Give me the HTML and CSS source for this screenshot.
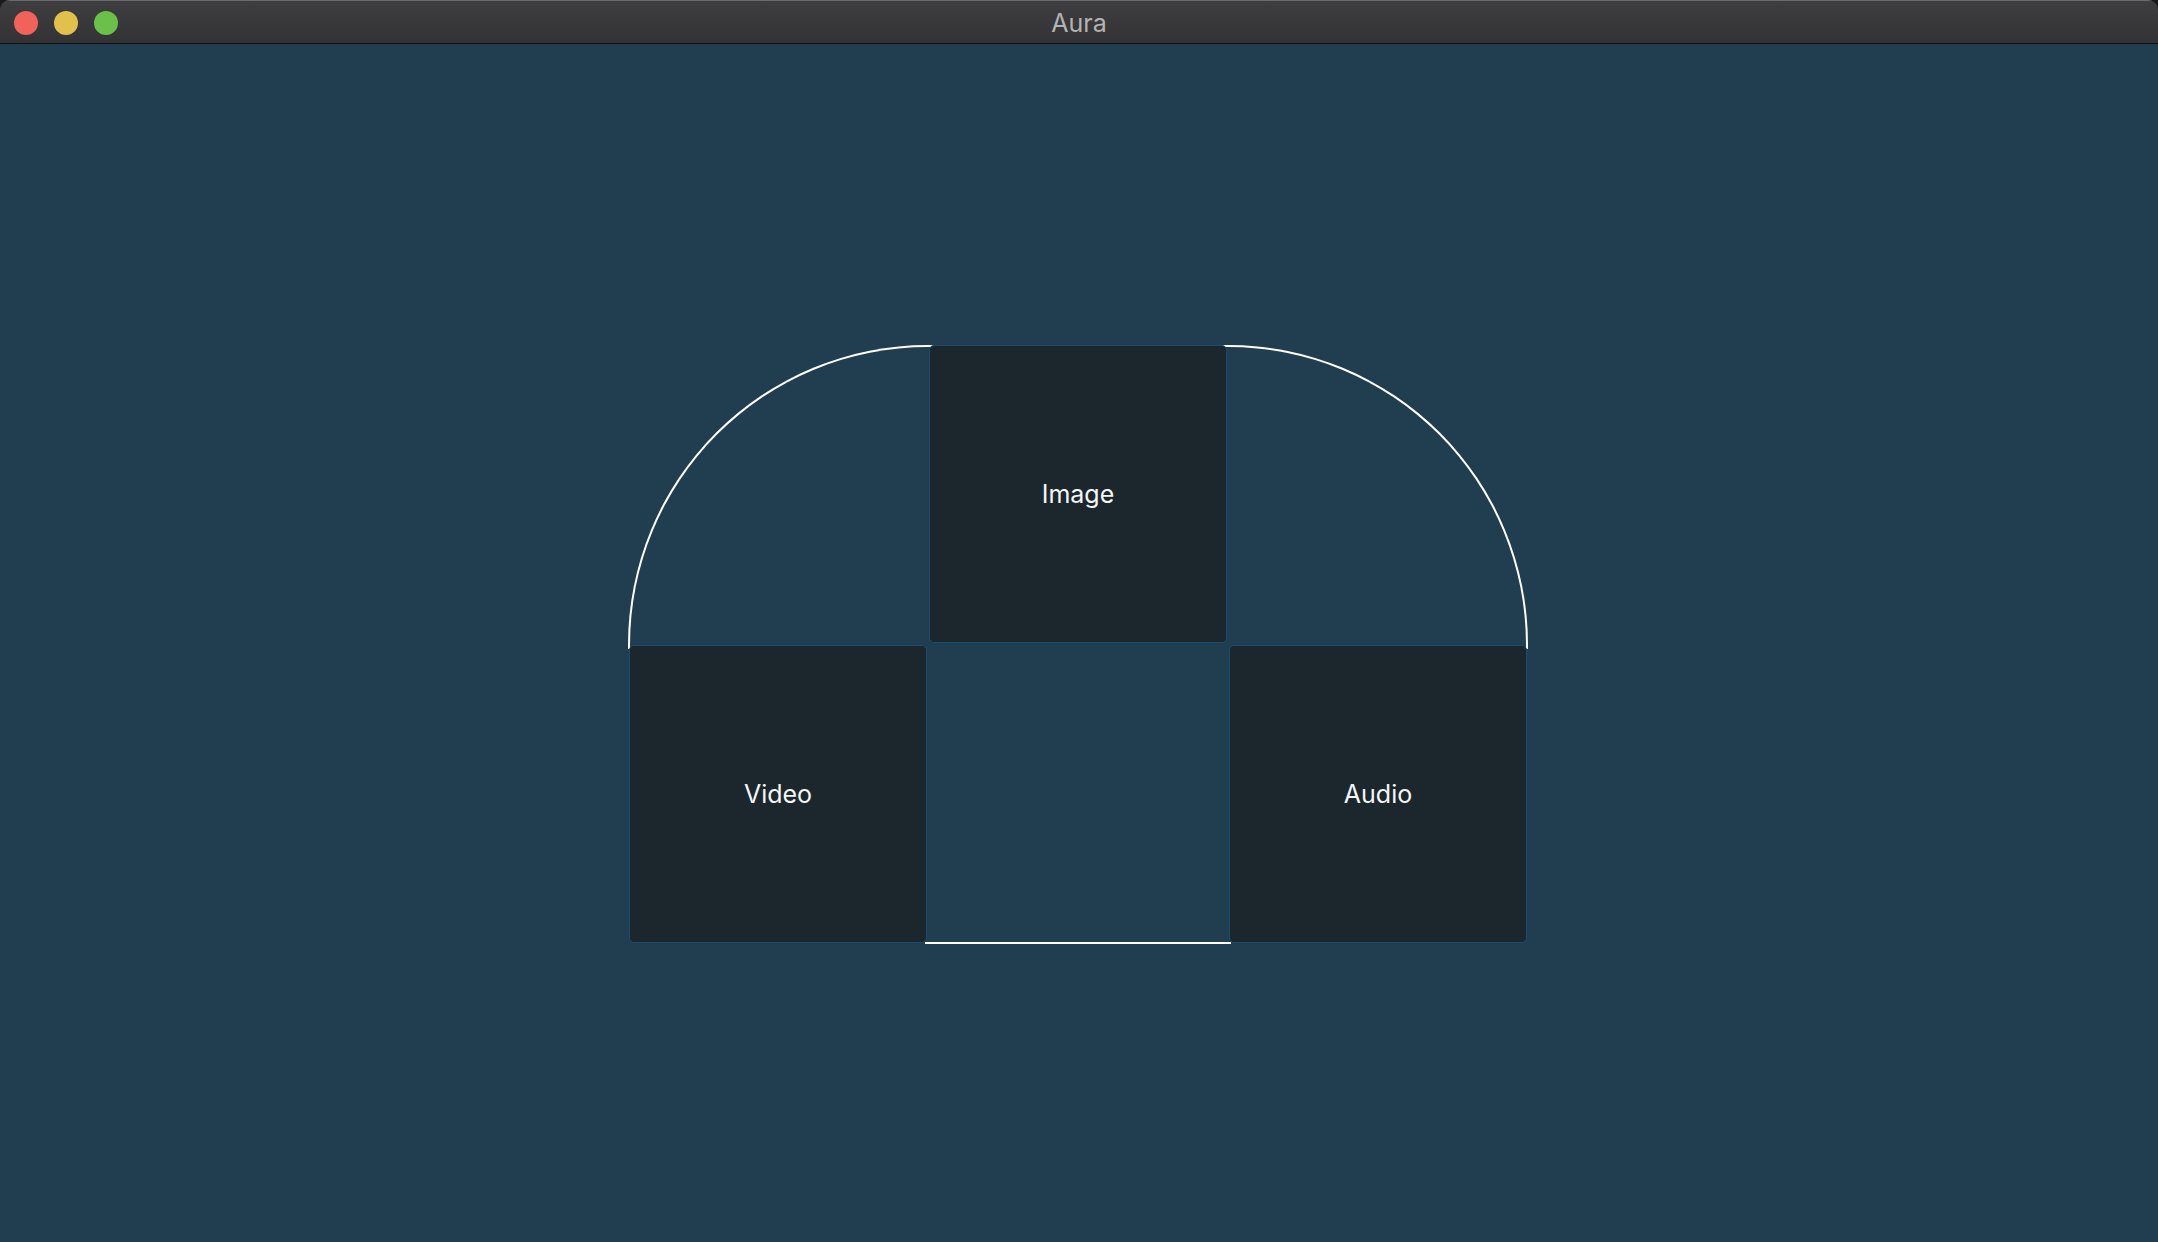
FILE: index.html
```html
<!DOCTYPE html>
<html>
<head>
<meta charset="utf-8">
<link rel="stylesheet" href="styles.css">
</head>
<body>
<div class="window">
  <div class="titlebar">
    <div class="lights">
      <span class="light red"></span>
      <span class="light yellow"></span>
      <span class="light green"></span>
    </div>
    <div class="title">Aura</div>
  </div>
  <div class="content">
    <div class="arch">
      <div class="grid">
        <div class="cell empty"></div>
        <div class="cell tile">Image</div>
        <div class="cell empty"></div>
        <div class="cell tile">Video</div>
        <div class="cell empty"></div>
        <div class="cell tile">Audio</div>
      </div>
    </div>
  </div>
</div>
</body>
</html>
```

FILE: styles.css
```css
html, body {
  margin: 0;
  padding: 0;
  background: #1a1a1a;
  width: 2158px;
  height: 1242px;
  overflow: hidden;
}
.window {
  width: 2158px;
  height: 1242px;
  display: flex;
  flex-direction: column;
  border-radius: 10px 10px 0 0;
  overflow: hidden;
  background: #213e51;
}
.titlebar {
  box-sizing: border-box;
  height: 44px;
  flex: 0 0 44px;
  background: linear-gradient(#3e3e40, #333335);
  border-top: 1px solid #6a6a6c;
  border-bottom: 1px solid #111;
  position: relative;
  display: flex;
  align-items: center;
  justify-content: center;
}
.lights {
  position: absolute;
  left: 14px;
  top: 10px;
  display: flex;
  gap: 16px;
}
.light {
  width: 24px;
  height: 24px;
  border-radius: 50%;
  display: block;
}
.red { background: #f0625a; }
.yellow { background: #e2c04e; }
.green { background: #6ac048; }
.title {
  font-family: "Inter", "Liberation Sans", sans-serif;
  font-size: 25px;
  color: #b3b3b3;
  margin-top: 1px;
}
.content {
  flex: 1;
  display: flex;
  align-items: center;
  justify-content: center;
  padding-right: 2px;
}
.arch {
  position: relative;
  width: 898px;
  height: 598px;
  margin-top: 2px;
}
.arch::before {
  content: "";
  position: absolute;
  left: -1px;
  top: 0;
  right: -1px;
  height: 302px;
  border: 2px solid #ffffff;
  border-bottom: none;
  border-radius: 300px 300px 0 0;
}
.arch::after {
  content: "";
  position: absolute;
  left: 296px;
  width: 306px;
  bottom: -1px;
  height: 2px;
  background: #ffffff;
}
.grid {
  position: relative;
  z-index: 1;
  display: grid;
  grid-template-columns: 298px 298px 298px;
  grid-template-rows: 298px 298px;
  column-gap: 2px;
  row-gap: 2px;
  width: 898px;
  height: 598px;
}
.tile {
  background: #1c262d;
  border: 1px solid #174d74;
  border-radius: 5px;
  display: flex;
  align-items: center;
  justify-content: center;
  font-family: "Inter", "Liberation Sans", sans-serif;
  font-size: 25px;
  color: #f4f6f8;
}
.empty {
  background: transparent;
}
```
